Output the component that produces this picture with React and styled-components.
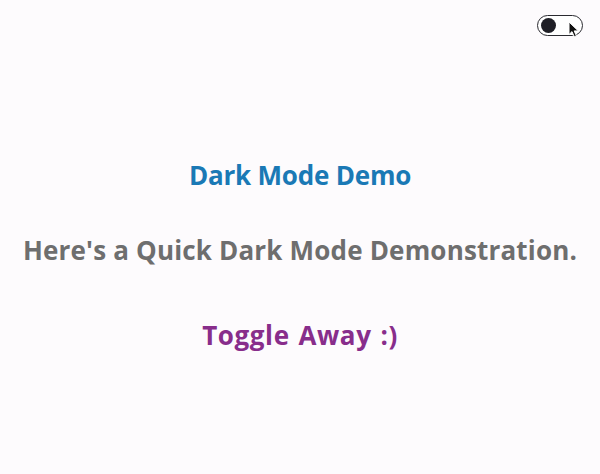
import React, { useState } from "react";
import styled, { createGlobalStyle } from "styled-components";

const GlobalStyle = createGlobalStyle`
  html, body {
    margin: 0;
    background: #fdfbfd;
  }
  body {
    font-family: "Open Sans", "Noto Sans", sans-serif;
  }
`;

const Page = styled.div`
  width: 600px;
  height: 474px;
  display: flex;
  flex-direction: column;
`;

const TopBar = styled.header`
  display: flex;
  justify-content: flex-end;
  padding: 15px 17px 0 0;
`;

const ToggleButton = styled.button`
  position: relative;
  width: 46px;
  height: 21px;
  padding: 0 3px;
  border: 1.5px solid #2a2a30;
  border-radius: 11px;
  background: #ffffff;
  display: flex;
  align-items: center;
  justify-content: ${(p) => (p.$on ? "flex-end" : "flex-start")};
  cursor: pointer;
  box-sizing: border-box;
`;

const Knob = styled.span`
  width: 15px;
  height: 15px;
  border-radius: 50%;
  background: #1f1f26;
`;

const Pointer = styled.svg`
  position: absolute;
  left: 30px;
  top: 5px;
`;

const Content = styled.main`
  display: flex;
  flex-direction: column;
  align-items: center;
  padding-top: 121px;
`;

const Line = styled.h2`
  margin: 0 0 ${(p) => p.$gap || 0}px;
  font-size: 26px;
  line-height: 36px;
  font-weight: 700;
  color: ${(p) => p.$color};
  letter-spacing: ${(p) => p.$spacing || 0}px;
  word-spacing: ${(p) => p.$words || 0}px;
  text-align: center;
`;

export default function App() {
  const [dark, setDark] = useState(false);
  return (
    <Page>
      <GlobalStyle />
      <TopBar>
        <ToggleButton $on={dark} onClick={() => setDark(!dark)} aria-label="Toggle dark mode">
          <Knob />
          <Pointer width="12" height="17" viewBox="0 0 12 17">
            <path
              d="M1 1 L1 13.5 L4 10.6 L6.3 15.8 L8.4 14.9 L6.2 9.9 L10.3 9.9 Z"
              fill="#111"
              stroke="#fff"
              strokeWidth="1"
              strokeLinejoin="round"
            />
          </Pointer>
        </ToggleButton>
      </TopBar>
      <Content>
        <Line $color="#1a79b5" $spacing={-0.2} $gap={39}>
          Dark Mode Demo
        </Line>
        <Line $color="#6e6e6e" $spacing={0.18} $gap={49}>
          Here's a Quick Dark Mode Demonstration.
        </Line>
        <Line $color="#882d8b" $spacing={0.6} $words={1.5}>
          Toggle Away :)
        </Line>
      </Content>
    </Page>
  );
}
